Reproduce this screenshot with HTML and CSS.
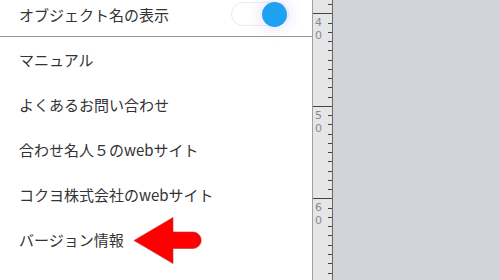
FILE: index.html
```html
<!DOCTYPE html>
<html lang="ja">
<head>
    <meta charset="UTF-8">
    <meta name="viewport" content="width=device-width, initial-scale=1.0">
    <title>メニュー</title>
    <link rel="stylesheet" href="styles.css">
</head>
<body>
    <div class="menu-panel">
        <div class="menu-list">
            <div class="menu-item menu-item-first">
                <span>オブジェクト名の表示</span>
                <div class="toggle">
                    <div class="toggle-knob"></div>
                </div>
            </div>
            <div class="menu-item">マニュアル</div>
            <div class="menu-item">よくあるお問い合わせ</div>
            <div class="menu-item">合わせ名人５のwebサイト</div>
            <div class="menu-item">コクヨ株式会社のwebサイト</div>
            <div class="menu-item">バージョン情報</div>
        </div>

        <svg class="pointer-arrow" width="70" height="48" viewBox="0 0 70 48">
            <path d="M1 23.5 L40 0.5 L40 15 L60 15 A8 8 0 0 1 60 31.5 L40 31.5 L40 46.5 Z" fill="#ff0000" stroke="#c03030" stroke-width="0.6"/>
        </svg>
    </div>

    <div class="ruler">
        <div class="ruler-label" style="top: 16px">4<br>0</div>
        <div class="ruler-label" style="top: 109px">5<br>0</div>
        <div class="ruler-label" style="top: 201px">6<br>0</div>
    </div>

    <div class="canvas"></div>
</body>
</html>
```

FILE: styles.css
```css
:root {
    --text-color: #333333;
    --accent-color: #1ea1f1;
    --divider-color: #9a9a9a;
    --ruler-color: #e6e6e6;
    --canvas-color: #d3d4d9;
}

* {
    margin: 0;
    padding: 0;
    box-sizing: border-box;
}

body {
    font-family: "Noto Sans CJK JP", "Noto Sans", sans-serif;
    color: var(--text-color);
    display: flex;
    height: 280px;
    overflow: hidden;
    background-color: var(--canvas-color);
}

.menu-panel {
    width: 313px;
    flex-shrink: 0;
    background-color: #ffffff;
    border-right: 1px solid #a0a0a0;
    position: relative;
    overflow: hidden;
}

.menu-list {
    margin-top: -8px;
}

.menu-item {
    height: 45px;
    padding-left: 19px;
    display: flex;
    align-items: center;
    font-size: 15px;
}

.menu-item-first {
    justify-content: space-between;
    padding-right: 23px;
    border-bottom: 1px solid var(--divider-color);
}

.toggle {
    width: 58px;
    height: 24px;
    border-radius: 12px;
    background-color: #ffffff;
    border: 1px solid #ebebf0;
    display: flex;
    align-items: center;
    justify-content: flex-end;
    padding-right: 1px;
}

.toggle-knob {
    width: 25px;
    height: 25px;
    border-radius: 50%;
    background-color: var(--accent-color);
    box-shadow: 0 0 12px 5px rgba(150, 140, 230, 0.16);
}

.pointer-arrow {
    position: absolute;
    left: 133px;
    top: 217px;
}

.ruler {
    width: 20px;
    flex-shrink: 0;
    position: relative;
    background-color: var(--ruler-color);
    border-right: 1px solid #6a6a6a;
    background-image:
        repeating-linear-gradient(to bottom, #444 0 1px, transparent 1px 92.6px),
        repeating-linear-gradient(to bottom, #444 0 1px, transparent 1px 9.26px);
    background-size: 100% 100%, 4px 100%;
    background-position: 0 13px, right 0 top 4px;
    background-repeat: no-repeat;
}

.ruler-label {
    position: absolute;
    left: 2px;
    font-family: "DejaVu Sans", sans-serif;
    font-size: 11px;
    line-height: 13px;
    color: #8a8a8a;
}

.canvas {
    flex: 1;
    background-color: var(--canvas-color);
}
```
